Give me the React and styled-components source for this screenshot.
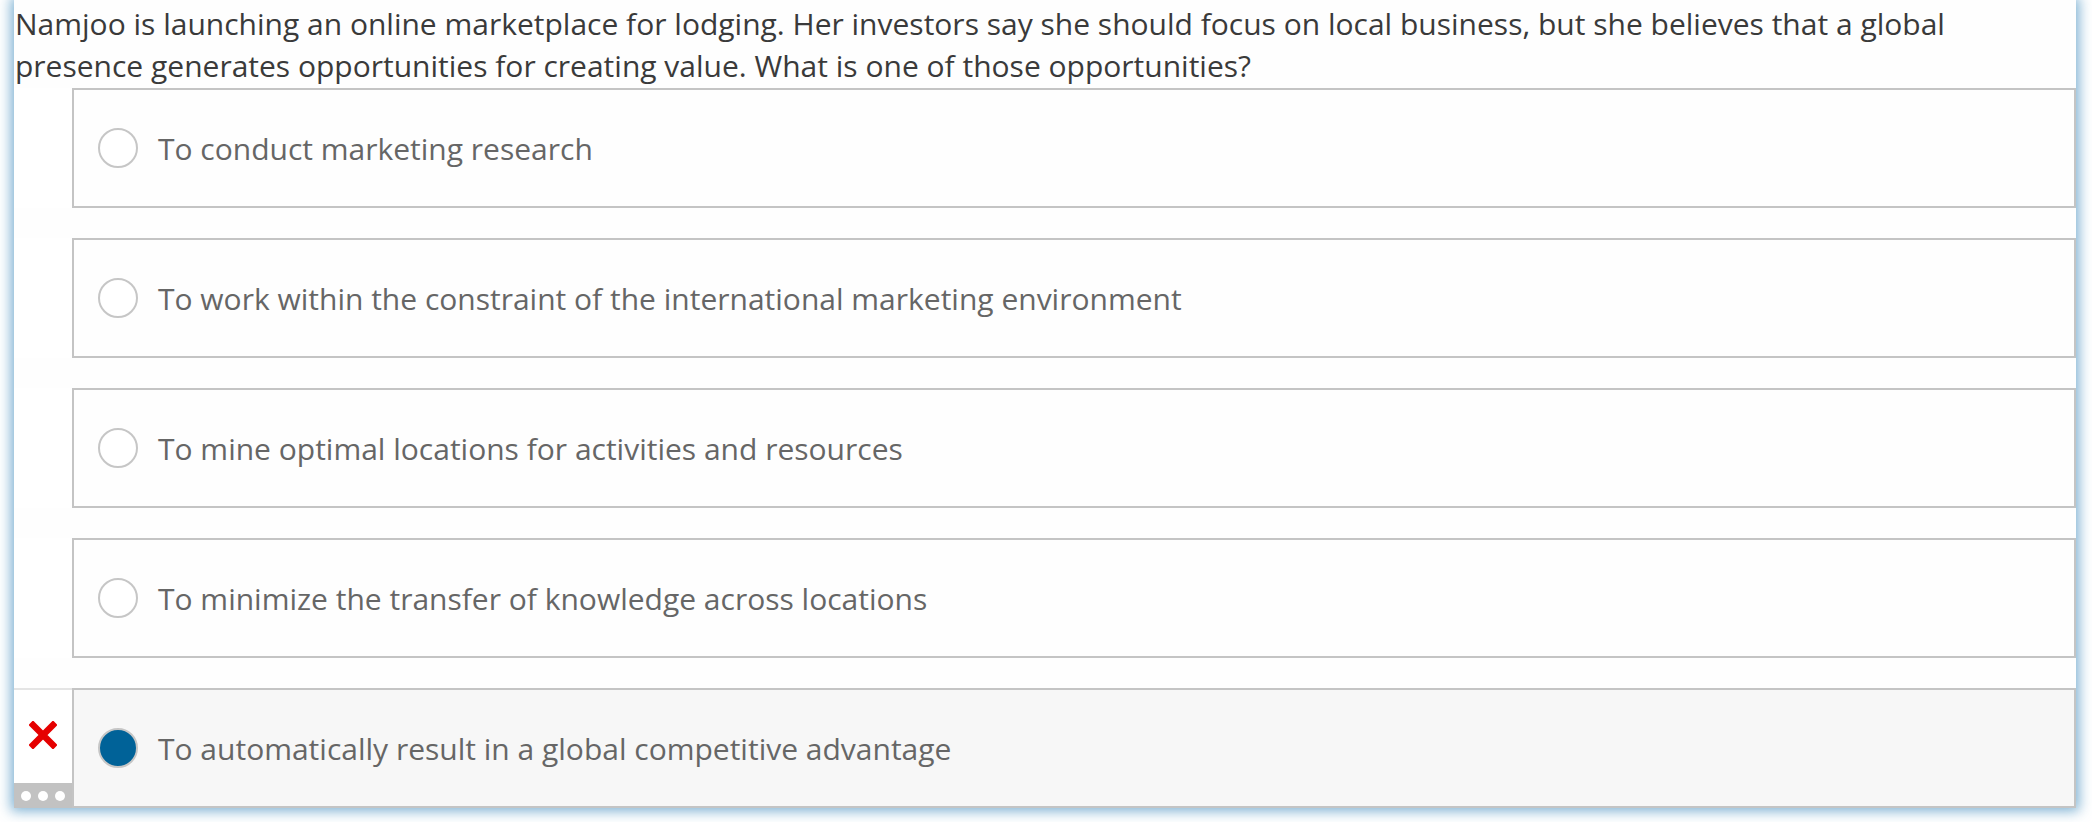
import React from "react";
import styled, { createGlobalStyle } from "styled-components";

const GlobalStyle = createGlobalStyle`
  html, body {
    margin: 0;
    padding: 0;
    background: #ffffff;
  }
  body {
    font-family: "Open Sans", "Noto Sans", sans-serif;
  }
`;

const options = [
  { id: "a", text: "To conduct marketing research" },
  { id: "b", text: "To work within the constraint of the international marketing environment" },
  { id: "c", text: "To mine optimal locations for activities and resources" },
  { id: "d", text: "To minimize the transfer of knowledge across locations" },
  { id: "e", text: "To automatically result in a global competitive advantage", selected: true, wrong: true },
];

const App = () => {
  return (
    <Page>
      <GlobalStyle />
      <Panel>
        <Question>
          Namjoo is launching an online marketplace for lodging. Her investors say she should
          focus on local business, but she believes that a global presence generates
          opportunities for creating value. What is one of those opportunities?
        </Question>
        <OptionList>
          {options.map((opt) => (
            <OptionRow key={opt.id}>
              <Marker $active={opt.wrong}>
                {opt.wrong && (
                  <>
                    <MarkIcon>
                      <svg width="28" height="28" viewBox="0 0 28 28">
                        <path
                          d="M4 4 L24 24 M24 4 L4 24"
                          stroke="#e50000"
                          strokeWidth="6.5"
                          strokeLinecap="square"
                        />
                      </svg>
                    </MarkIcon>
                    <DotsBar>
                      <Dot />
                      <Dot />
                      <Dot />
                    </DotsBar>
                  </>
                )}
              </Marker>
              <OptionBox $selected={opt.selected}>
                <Radio $checked={opt.selected} />
                <OptionText>{opt.text}</OptionText>
              </OptionBox>
            </OptionRow>
          ))}
        </OptionList>
      </Panel>
    </Page>
  );
};

const Page = styled.div`
  padding: 0 16px 14px 14px;
`;

const Panel = styled.div`
  background: #fefefe;
  box-shadow: 0 0 12px 3px rgba(80, 150, 195, 0.75);
`;

const Question = styled.div`
  font-size: 30px;
  line-height: 42px;
  color: #3a3a3a;
  padding: 3px 0 0 1px;
  margin-bottom: 1px;
`;

const OptionList = styled.div`
  display: flex;
  flex-direction: column;
  gap: 30px;
`;

const OptionRow = styled.div`
  display: grid;
  grid-template-columns: 58px 1fr;
`;

const Marker = styled.div`
  display: flex;
  flex-direction: column;
  border-top: 2px solid ${(p) => (p.$active ? "#e4e4e4" : "transparent")};
  background: #ffffff;
`;

const MarkIcon = styled.div`
  flex: 1;
  display: flex;
  align-items: center;
  justify-content: center;
  padding-bottom: 4px;
`;

const DotsBar = styled.div`
  height: 25px;
  background: #c2c2c2;
  display: flex;
  align-items: center;
  justify-content: center;
  gap: 7px;
`;

const Dot = styled.span`
  width: 10px;
  height: 10px;
  border-radius: 50%;
  background: #ffffff;
`;

const OptionBox = styled.div`
  height: 116px;
  display: flex;
  align-items: center;
  gap: 20px;
  padding-left: 24px;
  border: 2px solid #c4c4c4;
  background: ${(p) => (p.$selected ? "#f7f7f7" : "#fefefe")};
`;

const Radio = styled.span`
  width: 36px;
  height: 36px;
  flex-shrink: 0;
  border-radius: 50%;
  border: 2px solid #c6c6c6;
  background: ${(p) => (p.$checked ? "#006298" : "#ffffff")};
`;

const OptionText = styled.span`
  font-size: 30px;
  color: #666666;
`;

export default App;
